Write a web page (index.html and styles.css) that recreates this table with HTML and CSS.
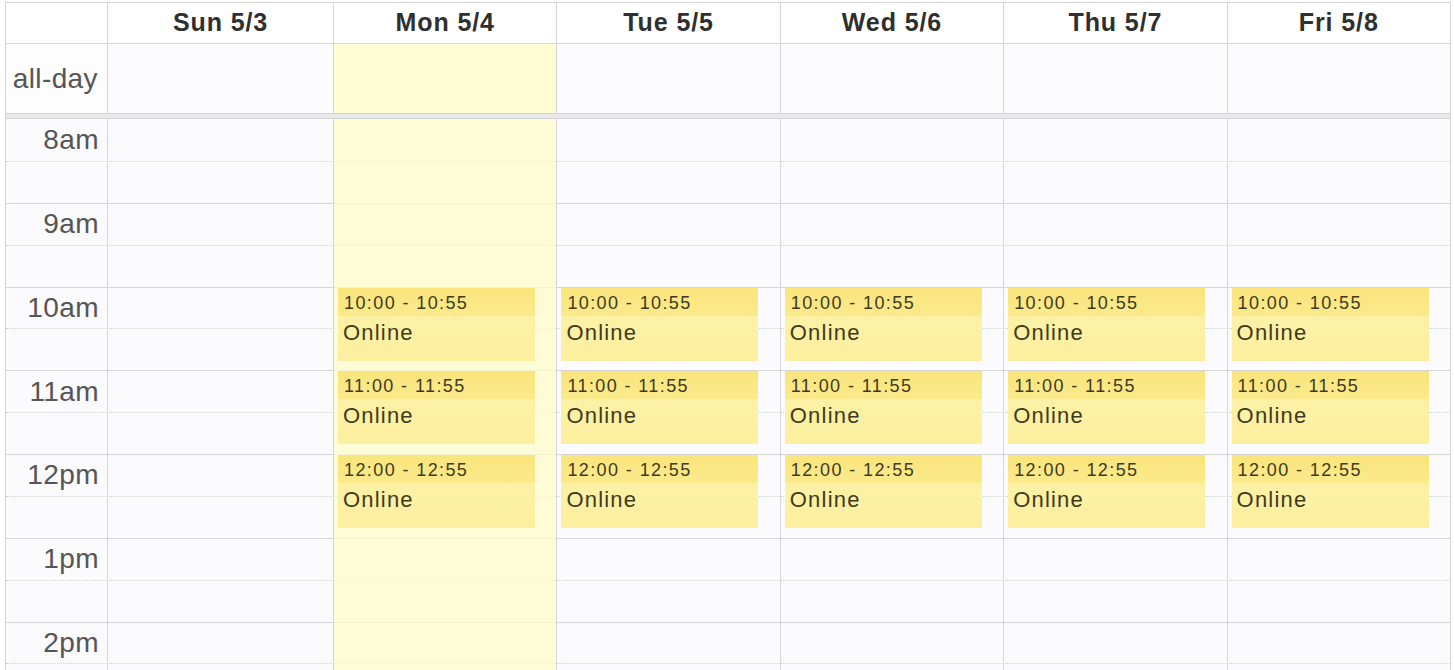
FILE: index.html
```html
<!DOCTYPE html>
<html>
<head>
<meta charset="utf-8">
<link rel="stylesheet" href="styles.css">
</head>
<body>
<div class="cal">
  <div class="head row7">
    <div class="hcell axis"></div>
    <div class="hcell">Sun 5/3</div>
    <div class="hcell">Mon 5/4</div>
    <div class="hcell">Tue 5/5</div>
    <div class="hcell">Wed 5/6</div>
    <div class="hcell">Thu 5/7</div>
    <div class="hcell">Fri 5/8</div>
  </div>
  <div class="allday row7">
    <div class="acell axis"><span class="alabel">all-day</span></div>
    <div class="acell"></div>
    <div class="acell today"></div>
    <div class="acell"></div>
    <div class="acell"></div>
    <div class="acell"></div>
    <div class="acell"></div>
  </div>
  <div class="divider"></div>
  <div class="timegrid">
    <div class="slats">
      <div class="slat hour"><span class="tlabel">8am</span></div>
      <div class="slat half"></div>
      <div class="slat hour"><span class="tlabel">9am</span></div>
      <div class="slat half"></div>
      <div class="slat hour"><span class="tlabel">10am</span></div>
      <div class="slat half"></div>
      <div class="slat hour"><span class="tlabel">11am</span></div>
      <div class="slat half"></div>
      <div class="slat hour"><span class="tlabel">12pm</span></div>
      <div class="slat half"></div>
      <div class="slat hour"><span class="tlabel">1pm</span></div>
      <div class="slat half"></div>
      <div class="slat hour"><span class="tlabel">2pm</span></div>
      <div class="slat half"></div>
    </div>
    <div class="cols row7">
      <div class="col axis"></div>
      <div class="col"></div>
      <div class="col today">
        <div class="event e10"><div class="etime">10:00 - 10:55</div><div class="etitle">Online</div></div>
        <div class="event e11"><div class="etime">11:00 - 11:55</div><div class="etitle">Online</div></div>
        <div class="event e12"><div class="etime">12:00 - 12:55</div><div class="etitle">Online</div></div>
      </div>
      <div class="col">
        <div class="event e10"><div class="etime">10:00 - 10:55</div><div class="etitle">Online</div></div>
        <div class="event e11"><div class="etime">11:00 - 11:55</div><div class="etitle">Online</div></div>
        <div class="event e12"><div class="etime">12:00 - 12:55</div><div class="etitle">Online</div></div>
      </div>
      <div class="col">
        <div class="event e10"><div class="etime">10:00 - 10:55</div><div class="etitle">Online</div></div>
        <div class="event e11"><div class="etime">11:00 - 11:55</div><div class="etitle">Online</div></div>
        <div class="event e12"><div class="etime">12:00 - 12:55</div><div class="etitle">Online</div></div>
      </div>
      <div class="col">
        <div class="event e10"><div class="etime">10:00 - 10:55</div><div class="etitle">Online</div></div>
        <div class="event e11"><div class="etime">11:00 - 11:55</div><div class="etitle">Online</div></div>
        <div class="event e12"><div class="etime">12:00 - 12:55</div><div class="etitle">Online</div></div>
      </div>
      <div class="col">
        <div class="event e10"><div class="etime">10:00 - 10:55</div><div class="etitle">Online</div></div>
        <div class="event e11"><div class="etime">11:00 - 11:55</div><div class="etitle">Online</div></div>
        <div class="event e12"><div class="etime">12:00 - 12:55</div><div class="etitle">Online</div></div>
      </div>
    </div>
  </div>
</div>
</body>
</html>
```

FILE: styles.css
```css
* { box-sizing: border-box; }
html, body {
  margin: 0;
  padding: 0;
  background: #ffffff;
  height: 670px;
  overflow: hidden;
}
body {
  font-family: "Liberation Sans", Arial, sans-serif;
}
.cal {
  margin: 2px 0 0 5px;
  width: 1446px;
  border-left: 1px solid #d6d6d6;
  border-right: 1px solid #d6d6d6;
  border-top: 1px solid #d6d6d6;
}
.row7 {
  display: grid;
  grid-template-columns: 101px 226px repeat(5, 1fr);
}
.head {
  height: 41px;
  background: #ffffff;
  border-bottom: 1px solid #d6d6d6;
}
.hcell {
  border-left: 1px solid #d6d6d6;
  display: flex;
  align-items: center;
  justify-content: center;
  font-weight: bold;
  font-size: 25px;
  letter-spacing: 0.9px;
  color: #2f2f2f;
  padding-bottom: 1px;
}
.hcell.axis, .acell.axis, .col.axis { border-left: none; }
.allday {
  height: 69px;
  background: #fcfcfe;
}
.acell {
  border-left: 1px solid #d6d6d6;
}
.acell.axis {
  display: flex;
  align-items: center;
  justify-content: flex-end;
  padding-right: 9px;
  background: #fdfdfe;
}
.alabel, .tlabel {
  font-size: 28px;
  letter-spacing: 0.4px;
  color: #555555;
}
.today { background: #fffdd3; }
.divider {
  height: 6px;
  background: #e9e9ea;
  border-top: 1px solid #d3d3d3;
  border-bottom: 1px solid #d3d3d3;
}
.timegrid {
  position: relative;
  background: #fbfbfd;
}
.slats { display: flex; flex-direction: column; }
.slat {
  height: 41.875px;
  display: flex;
  align-items: center;
}
.slat.hour { border-top: 1px solid #d6d6d6; }
.slat.half { border-top: 1px dotted #cfcfd2; }
.slats .slat:first-child { border-top: none; }
.tlabel { width: 101px; text-align: right; padding-right: 8px; }
.cols {
  position: absolute;
  inset: 0;
}
.col {
  position: relative;
  border-left: 1px solid #d6d6d6;
}
.col.today { background: rgba(255, 252, 200, 0.75); }
.event {
  position: absolute;
  left: 4px;
  width: 197px;
  height: 73px;
  background: linear-gradient(#fdf2a9, #fcef9f);
  color: #3e3a20;
  overflow: hidden;
}
.e10 { top: 168.5px; }
.e11 { top: 252.2px; }
.e12 { top: 336px; }
.etime {
  height: 28px;
  background: linear-gradient(#fae47c, #fbea8c);
  font-size: 18px;
  letter-spacing: 1.4px;
  line-height: 28px;
  padding-left: 6px;
  padding-top: 1px;
}
.etitle {
  font-size: 22px;
  letter-spacing: 1.2px;
  line-height: 28px;
  padding-left: 5px;
  padding-top: 3px;
}
```
